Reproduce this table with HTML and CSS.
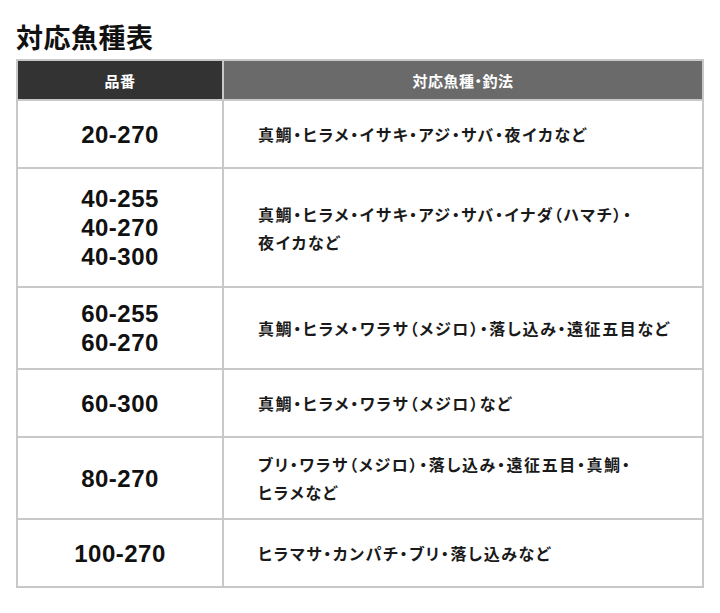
FILE: index.html
```html
<!DOCTYPE html>
<html lang="ja">
<head>
<meta charset="utf-8">
<title>対応魚種表</title>
<link rel="stylesheet" href="styles.css">
</head>
<body>
<h2 class="title">対応魚種表</h2>
<table class="fish-table">
  <colgroup>
    <col class="col-model">
    <col class="col-fish">
  </colgroup>
  <thead>
    <tr>
      <th class="th-model">品番</th>
      <th class="th-fish">対応魚種・釣法</th>
    </tr>
  </thead>
  <tbody>
    <tr>
      <td class="model">20-270</td>
      <td class="fish">真鯛・ヒラメ・イサキ・アジ・サバ・夜イカなど</td>
    </tr>
    <tr class="row-tall">
      <td class="model">40-255<br>40-270<br>40-300</td>
      <td class="fish">真鯛・ヒラメ・イサキ・アジ・サバ・イナダ（ハマチ）・<br>夜イカなど</td>
    </tr>
    <tr class="row-pair">
      <td class="model">60-255<br>60-270</td>
      <td class="fish">真鯛・ヒラメ・ワラサ（メジロ）・落し込み・遠征五目など</td>
    </tr>
    <tr>
      <td class="model">60-300</td>
      <td class="fish">真鯛・ヒラメ・ワラサ（メジロ）など</td>
    </tr>
    <tr>
      <td class="model">80-270</td>
      <td class="fish">ブリ・ワラサ（メジロ）・落し込み・遠征五目・真鯛・<br>ヒラメなど</td>
    </tr>
    <tr>
      <td class="model">100-270</td>
      <td class="fish">ヒラマサ・カンパチ・ブリ・落し込みなど</td>
    </tr>
  </tbody>
</table>
</body>
</html>
```

FILE: styles.css
```css
html, body {
  margin: 0;
  padding: 0;
  background: #ffffff;
}
body {
  padding: 20px 16px 0 16px;
  font-family: "Liberation Sans", "Noto Sans CJK JP", sans-serif;
  color: #111111;
}
.title {
  margin: 0 0 6px 0;
  font-family: "Noto Sans CJK JP", sans-serif;
  font-size: 27px;
  line-height: 33px;
  font-weight: 700;
  letter-spacing: 0.5px;
  color: #111111;
}
.fish-table {
  border-collapse: collapse;
  width: 686px;
  table-layout: fixed;
  border: 2px solid #c8c8c8;
}
.col-model { width: 206px; }
.col-fish { width: 480px; }
.fish-table th {
  height: 38px;
  padding: 0;
  font-family: "Noto Sans CJK JP", sans-serif;
  font-size: 15px;
  font-weight: 700;
  letter-spacing: 0.5px;
  font-feature-settings: "palt";
  color: #ffffff;
  text-align: center;
  border: 2px solid #c8c8c8;
}
.th-model { background: #333333; }
.th-fish { background: #6a6a6a; }
.fish-table td {
  border: 2px solid #c8c8c8;
  padding: 12px 0;
  height: 42px;
  vertical-align: middle;
}
.row-tall td {
  padding: 15px 0;
}
.row-pair td {
  padding: 11px 0;
}
.model {
  text-align: center;
  font-family: "Liberation Sans", sans-serif;
  font-size: 24px;
  font-weight: 700;
  line-height: 29px;
  letter-spacing: 0.5px;
  color: #111111;
}
.fish {
  padding-left: 34px !important;
  font-family: "Noto Sans CJK JP", sans-serif;
  font-size: 16px;
  font-weight: 700;
  line-height: 28px;
  letter-spacing: 1.6px;
  font-feature-settings: "palt";
  color: #1a1a1a;
}
```
